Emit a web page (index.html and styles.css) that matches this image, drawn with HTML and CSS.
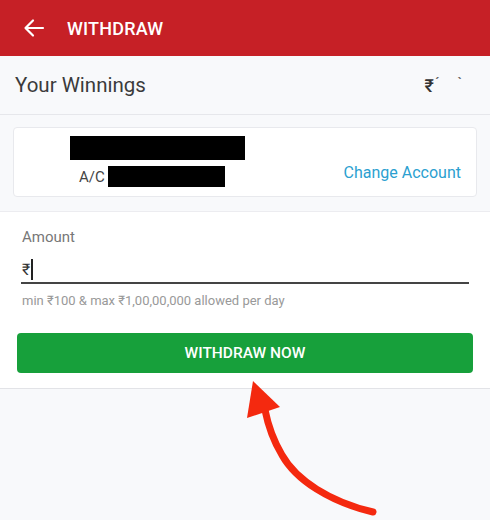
FILE: index.html
```html
<!DOCTYPE html>
<html lang="en">
<head>
  <meta charset="UTF-8" />
  <meta name="viewport" content="width=device-width, initial-scale=1.0"/>
  <title>Withdraw</title>
  <link rel="stylesheet" href="styles.css">
</head>
<body>
  <header class="topbar">
    <svg class="back" width="22" height="22" viewBox="0 0 22 22">
      <path d="M20 11H3M10 3.5L2.5 11L10 18.5" fill="none" stroke="#fff" stroke-width="2.2" stroke-linecap="round" stroke-linejoin="round"/>
    </svg>
    <span class="topbar-title">WITHDRAW</span>
  </header>

  <div class="winnings">
    <span class="winnings-label">Your Winnings</span>
    <span class="winnings-value">₹<span class="ghost">´</span><span class="ghost">`</span></span>
  </div>

  <div class="account-wrap">
    <div class="account-card">
      <div class="account-info">
        <div class="redact redact-name"></div>
        <div class="ac-line">A/C <span class="redact redact-num"></span></div>
      </div>
      <a class="change-link">Change Account</a>
    </div>
  </div>

  <section class="amount">
    <label class="amount-label">Amount</label>
    <div class="amount-input"><span class="rupee">₹</span><span class="caret"></span></div>
    <p class="hint">min ₹100 &amp; max ₹1,00,00,000 allowed per day</p>
    <button class="withdraw-btn">WITHDRAW NOW</button>
  </section>

  <!-- pointer arrow drawn over the page -->
  <svg class="pointer" width="490" height="520" viewBox="0 0 490 520">
    <path d="M373 512 C330 502 296 480 282 455 C273 440 268 425 265 410" fill="none" stroke="#f4290f" stroke-width="7" stroke-linecap="round"/>
    <polygon points="253,381 247,418 280,407" fill="#f4290f"/>
  </svg>
</body>
</html>
```

FILE: styles.css
```css
body {
  margin: 0;
  font-family: Roboto, "Noto Sans", sans-serif;
  background-color: #f8f9fb;
  color: #333;
  width: 490px;
  height: 520px;
  overflow: hidden;
  position: relative;
}

.topbar {
  height: 56px;
  background-color: #c62026;
  display: flex;
  align-items: center;
  padding-left: 23px;
}

.back {
  display: block;
}

.topbar-title {
  margin-left: 22px;
  color: #fff;
  font-size: 18px;
  font-weight: 500;
  letter-spacing: 0.2px;
}

.winnings {
  height: 58px;
  display: flex;
  align-items: center;
  justify-content: space-between;
  padding: 0 15px;
  border-bottom: 1px solid #e6e7eb;
}

.winnings-label {
  font-size: 20.5px;
  color: #3b3b3b;
}

.winnings-value {
  font-size: 18px;
  color: #333;
  margin-right: 13px;
  font-weight: 500;
}

.ghost {
  color: #666;
  font-size: 14px;
  vertical-align: top;
  margin-left: 1px;
}

.ghost + .ghost {
  margin-left: 18px;
}

.account-wrap {
  padding: 12px 13px 14px;
  border-bottom: 1px solid #ececf0;
}

.account-card {
  height: 68px;
  background-color: #fff;
  border: 1px solid #e8e9ed;
  border-radius: 4px;
  display: flex;
  align-items: center;
  justify-content: space-between;
  padding: 0 15px 0 56px;
}

.account-info {
  display: flex;
  flex-direction: column;
  gap: 6px;
  align-self: flex-start;
  padding-top: 8px;
}

.redact {
  background-color: #000;
  display: inline-block;
}

.redact-name {
  width: 175px;
  height: 24px;
}

.ac-line {
  display: flex;
  align-items: center;
  gap: 3px;
  padding-left: 9px;
  font-size: 15px;
  color: #444;
}

.redact-num {
  width: 117px;
  height: 21px;
}

.change-link {
  color: #2b9fd0;
  font-size: 16px;
  align-self: flex-end;
  margin-bottom: 14px;
}

.amount {
  background-color: #fff;
  border-bottom: 1px solid #e2e3e7;
  padding: 16px 21px 15px 17px;
}

.amount-label {
  display: block;
  font-size: 15px;
  color: #777;
  padding-left: 5px;
}

.amount-input {
  margin-top: 10px;
  height: 26px;
  border-bottom: 2px solid #444;
  display: flex;
  align-items: center;
  padding-left: 1px;
  margin-left: 4px;
}

.rupee {
  font-size: 16px;
  color: #333;
}

.caret {
  width: 2px;
  height: 21px;
  background-color: #222;
  margin-left: 1px;
}

.hint {
  margin: 9px 0 0;
  padding-left: 5px;
  font-size: 13px;
  color: #999;
}

.withdraw-btn {
  display: block;
  width: 456px;
  height: 40px;
  margin-top: 25px;
  border: none;
  border-radius: 4px;
  background-color: #17a03b;
  color: #fff;
  font-family: inherit;
  font-size: 15.5px;
  font-weight: 500;
}

.pointer {
  position: absolute;
  left: 0;
  top: 0;
  pointer-events: none;
}
```
